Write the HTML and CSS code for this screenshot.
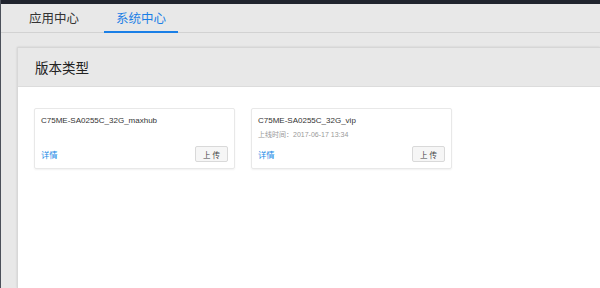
FILE: index.html
```html
<!DOCTYPE html>
<html lang="zh-CN">
<head>
    <meta charset="UTF-8">
    <meta name="viewport" content="width=device-width, initial-scale=1.0">
    <title>系统中心</title>
    <link rel="stylesheet" href="styles.css">
</head>
<body>
    <div class="top-bar"></div>
    <div class="side-mark"></div>

    <div class="tabs">
        <span class="tab">应用中心</span>
        <span class="tab active">系统中心</span>
    </div>

    <div class="page">
        <div class="panel">
            <div class="panel-header">版本类型</div>
            <div class="panel-body">
                <!-- version cards -->
                <div class="card">
                    <div class="card-title">C75ME-SA0255C_32G_maxhub</div>
                    <div class="card-footer">
                        <a class="detail-link">详情</a>
                        <button class="upload-btn" type="button">上 传</button>
                    </div>
                </div>

                <div class="card">
                    <div class="card-title">C75ME-SA0255C_32G_vip</div>
                    <div class="card-date">上线时间：2017-06-17 13:34</div>
                    <div class="card-footer">
                        <a class="detail-link">详情</a>
                        <button class="upload-btn" type="button">上 传</button>
                    </div>
                </div>
            </div>
        </div>
    </div>
</body>
</html>
```

FILE: styles.css
```css
html {
    overflow: hidden;
}

body {
    margin: 0;
    height: 288px;
    overflow: hidden;
    background-color: #e8e8e8;
    border-left: 1px solid #4b505a;
    font-family: "Liberation Sans", "Noto Sans CJK SC", sans-serif;
    color: #333;
    position: relative;
}

.top-bar {
    height: 4px;
    background-color: #20242e;
}

.side-mark {
    position: absolute;
    left: -1px;
    top: 38px;
    width: 1px;
    height: 34px;
    background-color: #6f9be0;
}

.tabs {
    display: flex;
    gap: 13px;
    height: 28px;
    padding-left: 16px;
    border-bottom: 1px solid #d2d2d2;
}

.tab {
    display: flex;
    align-items: center;
    padding: 0 12px;
    font-size: 12.5px;
    color: #333;
    border-bottom: 2px solid transparent;
    margin-bottom: -1px;
}

.tab.active {
    color: #1a7fe6;
    border-bottom-color: #1a7fe6;
}

.page {
    padding: 14px 0 0 16px;
}

.panel {
    background-color: #fff;
    border-top: 1px solid #d6d6d6;
    border-left: 1px solid #d8d8d8;
    box-shadow: 0 0 2px rgba(0, 0, 0, 0.12);
    height: 240px;
}

.panel-header {
    height: 38px;
    display: flex;
    align-items: center;
    padding-left: 17px;
    background-color: #e8e8e8;
    border-bottom: 1px solid #dcdcdc;
    font-size: 13.5px;
    color: #222;
}

.panel-body {
    display: flex;
    gap: 16px;
    padding: 21px 16px;
}

.card {
    width: 187px;
    height: 47px;
    padding: 6px;
    border: 1px solid #e8e8e8;
    border-radius: 2px;
    box-shadow: 0 1px 2px rgba(0, 0, 0, 0.06);
    display: flex;
    flex-direction: column;
}

.card-title {
    font-size: 8px;
    line-height: 11px;
    color: #333;
}

.card-date {
    margin-top: 4px;
    font-size: 7px;
    line-height: 10px;
    color: #999;
}

.card-footer {
    margin-top: auto;
    display: flex;
    justify-content: space-between;
    align-items: center;
}

.detail-link {
    font-size: 8.3px;
    color: #1a8ae6;
    cursor: pointer;
}

.upload-btn {
    width: 33px;
    height: 16px;
    padding: 0;
    font-family: inherit;
    font-size: 7.5px;
    color: #444;
    background-color: #f6f6f6;
    border: 1px solid #d9d9d9;
    border-radius: 2px;
}
```
